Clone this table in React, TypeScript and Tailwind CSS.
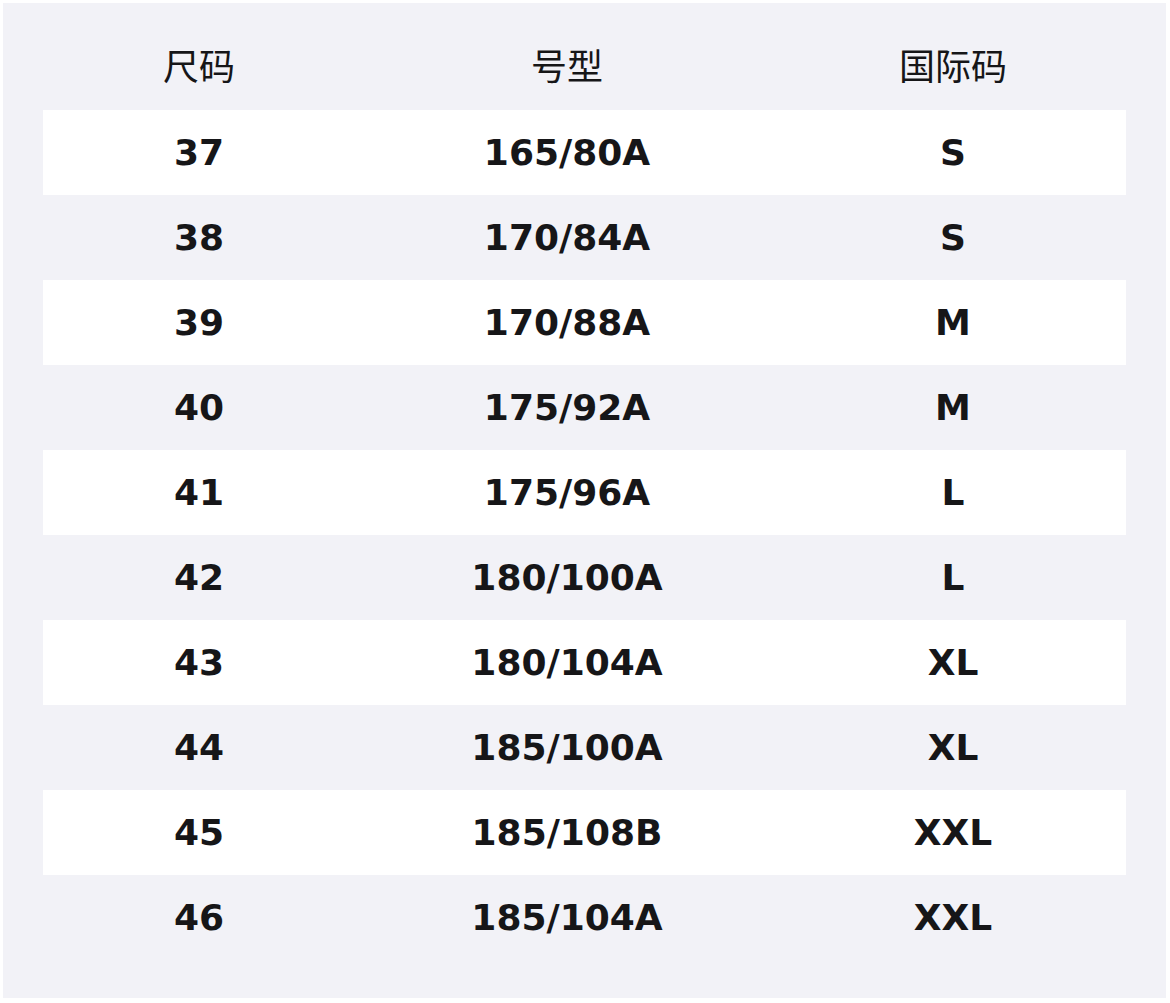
const ROWS: [string, string, string][] = [
  ["37", "165/80A", "S"],
  ["38", "170/84A", "S"],
  ["39", "170/88A", "M"],
  ["40", "175/92A", "M"],
  ["41", "175/96A", "L"],
  ["42", "180/100A", "L"],
  ["43", "180/104A", "XL"],
  ["44", "185/100A", "XL"],
  ["45", "185/108B", "XXL"],
  ["46", "185/104A", "XXL"],
];

const COLS = "grid grid-cols-[312px_424px_348px]";

export default function App() {
  return (
    <div className="min-h-screen bg-white p-[3px]">
      <div className="w-[1163px] bg-[#f2f2f7] px-[40px] pt-[22px] pb-[38px] text-[#161618]">
        <div
          className={`${COLS} h-[85px] items-center pb-[7px] text-center text-[36px] font-normal`}
          style={{ fontFamily: '"Noto Sans CJK SC", "Noto Sans", sans-serif' }}
        >
          <div>尺码</div>
          <div>号型</div>
          <div>国际码</div>
        </div>
        <div style={{ fontFamily: '"DejaVu Sans", sans-serif' }}>
          {ROWS.map((r, i) => (
            <div
              key={r[0]}
              className={`${COLS} h-[85px] items-center text-center text-[36px] font-bold ${
                i % 2 === 0 ? "bg-white" : "bg-[#f2f2f7]"
              }`}
            >
              <div>{r[0]}</div>
              <div>{r[1]}</div>
              <div>{r[2]}</div>
            </div>
          ))}
        </div>
      </div>
    </div>
  );
}
